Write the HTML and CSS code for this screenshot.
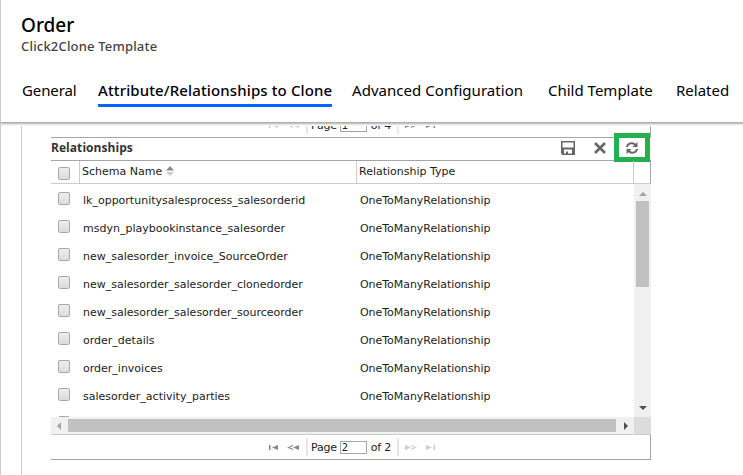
FILE: index.html
```
<!DOCTYPE html>
<html lang="en">
<head>
<meta charset="utf-8">
<title>Order</title>
<link rel="stylesheet" href="styles.css">
</head>
<body>
<header class="top">
  <h1>Order</h1>
  <p class="sub">Click2Clone Template</p>
  <nav class="tabs">
    <a class="tab t1">General</a>
    <a class="tab t2 active">Attribute/Relationships to Clone</a>
    <a class="tab t3">Advanced Configuration</a>
    <a class="tab t4">Child Template</a>
    <a class="tab t5">Related</a>
  </nav>
</header>
<main class="content">
  <div class="clip">
    <div class="pager">
      <svg class="nav dim" width="30" height="7" viewBox="0 0 30 7"><path d="M0 1h1.5v5H0zM9 1v5L3 3.500zM30 1v5l-6-2.500zM24 1l-6 2.500 6 2.500V4.800L20.500 3.500 24 2.200z"/></svg>
      <div class="page"><span>Page</span><span class="num">1</span><span>of 4</span></div>
      <svg class="nav" width="30" height="7" viewBox="0 0 30 7"><path d="M0 1v5l6-2.500zM6 1l6 2.500L6 6V4.800l3.500-1.300L6 2.200zM21 1v5l6-2.500zM28.500 1H30v5h-1.500z"/></svg>
    </div>
  </div>
  <section class="grid">
    <div class="bar">
      <h2>Relationships</h2>
      <svg class="save" width="14" height="14" viewBox="0 0 14 14"><path fill-rule="evenodd" d="M0 0h14v14H1.500L0 12.500zM1.500 1.500v5h11v-5zM3 8.500v4h2v-2h2v2h4v-4z"/></svg>
      <svg class="close" width="12" height="12" viewBox="0 0 12 12"><path d="M1 1l10 10M11 1L1 11"/></svg>
      <div class="mark"><svg width="12" height="12" viewBox="0 0 12 12"><path class="arc" d="M1 5C1.500 1 7 0 9.500 3M11 7C10.500 11 5 12 2.500 9"/><path d="M11.500 0v5h-5zM.5 12V7h5z"/></svg></div>
    </div>
    <div class="head">
      <div class="c0"><i class="box"></i></div>
      <div class="c1"><span class="schema">Schema Name</span><svg width="8" height="10" viewBox="0 0 8 10"><path fill="#888" d="M4 0l4 4.500H0z"/><path fill="#ccc" d="M0 6h8L4 10z"/></svg></div>
      <div class="c2"><span class="rtype">Relationship Type</span></div>
    </div>
    <div class="body">
      <div class="rows">
        <div class="row"><i class="box"></i><span class="name">lk_opportunitysalesprocess_salesorderid</span><span class="type">OneToManyRelationship</span></div>
        <div class="row"><i class="box"></i><span class="name">msdyn_playbookinstance_salesorder</span><span class="type">OneToManyRelationship</span></div>
        <div class="row"><i class="box"></i><span class="name">new_salesorder_invoice_SourceOrder</span><span class="type">OneToManyRelationship</span></div>
        <div class="row"><i class="box"></i><span class="name">new_salesorder_salesorder_clonedorder</span><span class="type">OneToManyRelationship</span></div>
        <div class="row"><i class="box"></i><span class="name">new_salesorder_salesorder_sourceorder</span><span class="type">OneToManyRelationship</span></div>
        <div class="row"><i class="box"></i><span class="name">order_details</span><span class="type">OneToManyRelationship</span></div>
        <div class="row"><i class="box"></i><span class="name">order_invoices</span><span class="type">OneToManyRelationship</span></div>
        <div class="row"><i class="box"></i><span class="name">salesorder_activity_parties</span><span class="type">OneToManyRelationship</span></div>
        <div class="row"><i class="box"></i></div>
      </div>
      <div class="vbar">
        <svg width="8" height="4" viewBox="0 0 8 4"><path fill="#a3a3a3" d="M4 0l4 4H0z"/></svg>
        <div class="vthumb"></div>
        <svg class="down" width="8" height="4" viewBox="0 0 8 4"><path fill="#505050" d="M0 0h8L4 4z"/></svg>
      </div>
    </div>
    <div class="hbar">
      <svg width="4" height="8" viewBox="0 0 4 8"><path fill="#a3a3a3" d="M4 0v8L0 4z"/></svg>
      <div class="hthumb"></div>
      <svg class="right" width="4" height="8" viewBox="0 0 4 8"><path fill="#505050" d="M0 0v8l4-4z"/></svg>
      <div class="corner"></div>
    </div>
  </section>
  <div class="pager">
    <svg class="nav" width="30" height="7" viewBox="0 0 30 7"><path d="M0 1h1.500v5H0zM9 1v5L3 3.500zM30 1v5l-6-2.500zM24 1l-6 2.500 6 2.500V4.800L20.500 3.500 24 2.200z"/></svg>
    <div class="page"><span>Page</span><span class="num">2</span><span>of 2</span></div>
    <svg class="nav dim" width="30" height="7" viewBox="0 0 30 7"><path d="M0 1v5l6-2.500zM6 1l6 2.500L6 6V4.800l3.500-1.300L6 2.200zM21 1v5l6-2.500zM28.500 1H30v5h-1.500z"/></svg>
  </div>
</main>
</body>
</html>
```
FILE: styles.css
```
* { box-sizing: border-box; }
body {
  margin: 0;
  width: 743px;
  height: 475px;
  overflow: hidden;
  border-left: 1px solid #ccc;
  background: #fff;
  color: #222;
  font: 11px/14px "DejaVu Sans", sans-serif;
}
svg { display: block; flex: none; }
.top {
  height: 126px;
  padding: 12px 0 0 20px;
  color: #000;
  font-family: "Noto Sans", sans-serif;
  background: linear-gradient(#fff 122px, #a8a8a8 122px, #b4b4b4 123px, #d8d8d8 124px, #f0f0f0 125px, #fff);
}
h1 { margin: 0; font-size: 19px; line-height: 26px; font-weight: 500; }
.sub { margin: 0; font-size: 13px; line-height: 16px; font-weight: 500; color: #444; letter-spacing: .18px; }
.tabs { display: flex; margin: 24px 0 0 1px; height: 29px; }
.tab { white-space: nowrap; font-size: 15px; line-height: 24px; height: 29px; }
.t1 { width: 76px; letter-spacing: -.1px; }
.t2 { width: 234px; margin-right: 20px; letter-spacing: .12px; }
.t3 { width: 196px; letter-spacing: .04px; }
.t4 { width: 128px; }
.active { font-weight: 500; border-bottom: 3px solid #0066ff; border-radius: 1px; }
.content {
  margin-left: 20px;
  padding-left: 29px;
  height: 349px;
  border-left: 1px solid #ccc;
}
.clip { height: 12px; width: 600px; overflow: hidden; display: flex; align-items: flex-end; }
.pager {
  width: 600px;
  height: 25px;
  flex: none;
  display: flex;
  align-items: center;
  padding-left: 218px;
  border: solid #a6a6a6;
  border-width: 0 1px 1px 0;
}
.nav { fill: #888; }
.dim { fill: #ccc; }
.page {
  display: flex;
  align-items: center;
  height: 18px;
  width: 93px;
  margin: 0 6px 0 7px;
  padding-left: 3px;
  border: solid #e6e6e6;
  border-width: 0 2px;
  letter-spacing: -.2px;
  white-space: nowrap;
}
.page span:not(.num) { padding-top: 2px; }
.num {
  width: 27px;
  height: 13px;
  margin: 0 4px 0 3px;
  padding-left: 1px;
  border: 1px solid #a6a6a6;
  line-height: 11px;
  font-size: 10px;
}
.grid { width: 600px; }
.bar { display: flex; align-items: center; height: 23px; border-bottom: 1px solid #a6a6a6; padding-bottom: 2px; }
h2 { margin: 0; width: 510px; font: bold 12px/16px "Open Sans", sans-serif; color: #333; letter-spacing: .05px; }
.save { fill: #666; }
.close { margin-left: 19px; fill: none; stroke: #666; stroke-width: 2.600; }
.mark {
  display: flex;
  align-items: center;
  justify-content: center;
  flex: none;
  width: 36px;
  height: 29px;
  margin: -1px 0 0 8px;
  border: 5px solid #22b14c;
  background: #fff;
}
.mark svg { fill: #666; }
.arc { fill: none; stroke: #666; stroke-width: 2; }
.head { display: flex; height: 23px; border-right: 1px solid #a6a6a6; border-bottom: 1px solid #ccc; }
.head span { line-height: 22px; }
.c0 { width: 29px; padding: 6px 0 0 7px; border-right: 1px solid #ccc; }
.c1 { display: flex; width: 277px; padding-left: 2px; border-right: 1px solid #ccc; }
.c1 svg { margin: 5px 0 0 4px; }
.c2 { width: 277px; padding-left: 2px; border-right: 1px solid #ccc; }
.box {
  display: block;
  flex: none;
  width: 12px;
  height: 13px;
  border: 1px solid #a9a9a9;
  border-radius: 2px;
  background: linear-gradient(#eee, #dcdcdc);
}
.body { display: flex; height: 233px; overflow: hidden; }
.rows { width: 583px; }
.row { display: flex; height: 28px; padding: 8px 0 0 7px; }
.row span { white-space: nowrap; line-height: 17px; }
.row .type { letter-spacing: -.04px; }
.name { width: 277px; margin-left: 13px; }
.vbar { width: 17px; background: #f0f0f0; display: flex; flex-direction: column; align-items: center; padding: 8px 0 7px; }
.vthumb { width: 13px; height: 86px; margin-top: 5px; background: #c1c1c1; }
.down { margin-top: auto; }
.hbar { display: flex; align-items: center; height: 18px; padding-left: 6px; background: #f0f0f0; border-bottom: 1px solid #ccc; }
.hthumb { width: 548px; height: 13px; margin: 0 8px 0 7px; background: #c1c1c1; }
.corner { width: 17px; height: 17px; margin-left: auto; background: #dcdcdc; }
```
